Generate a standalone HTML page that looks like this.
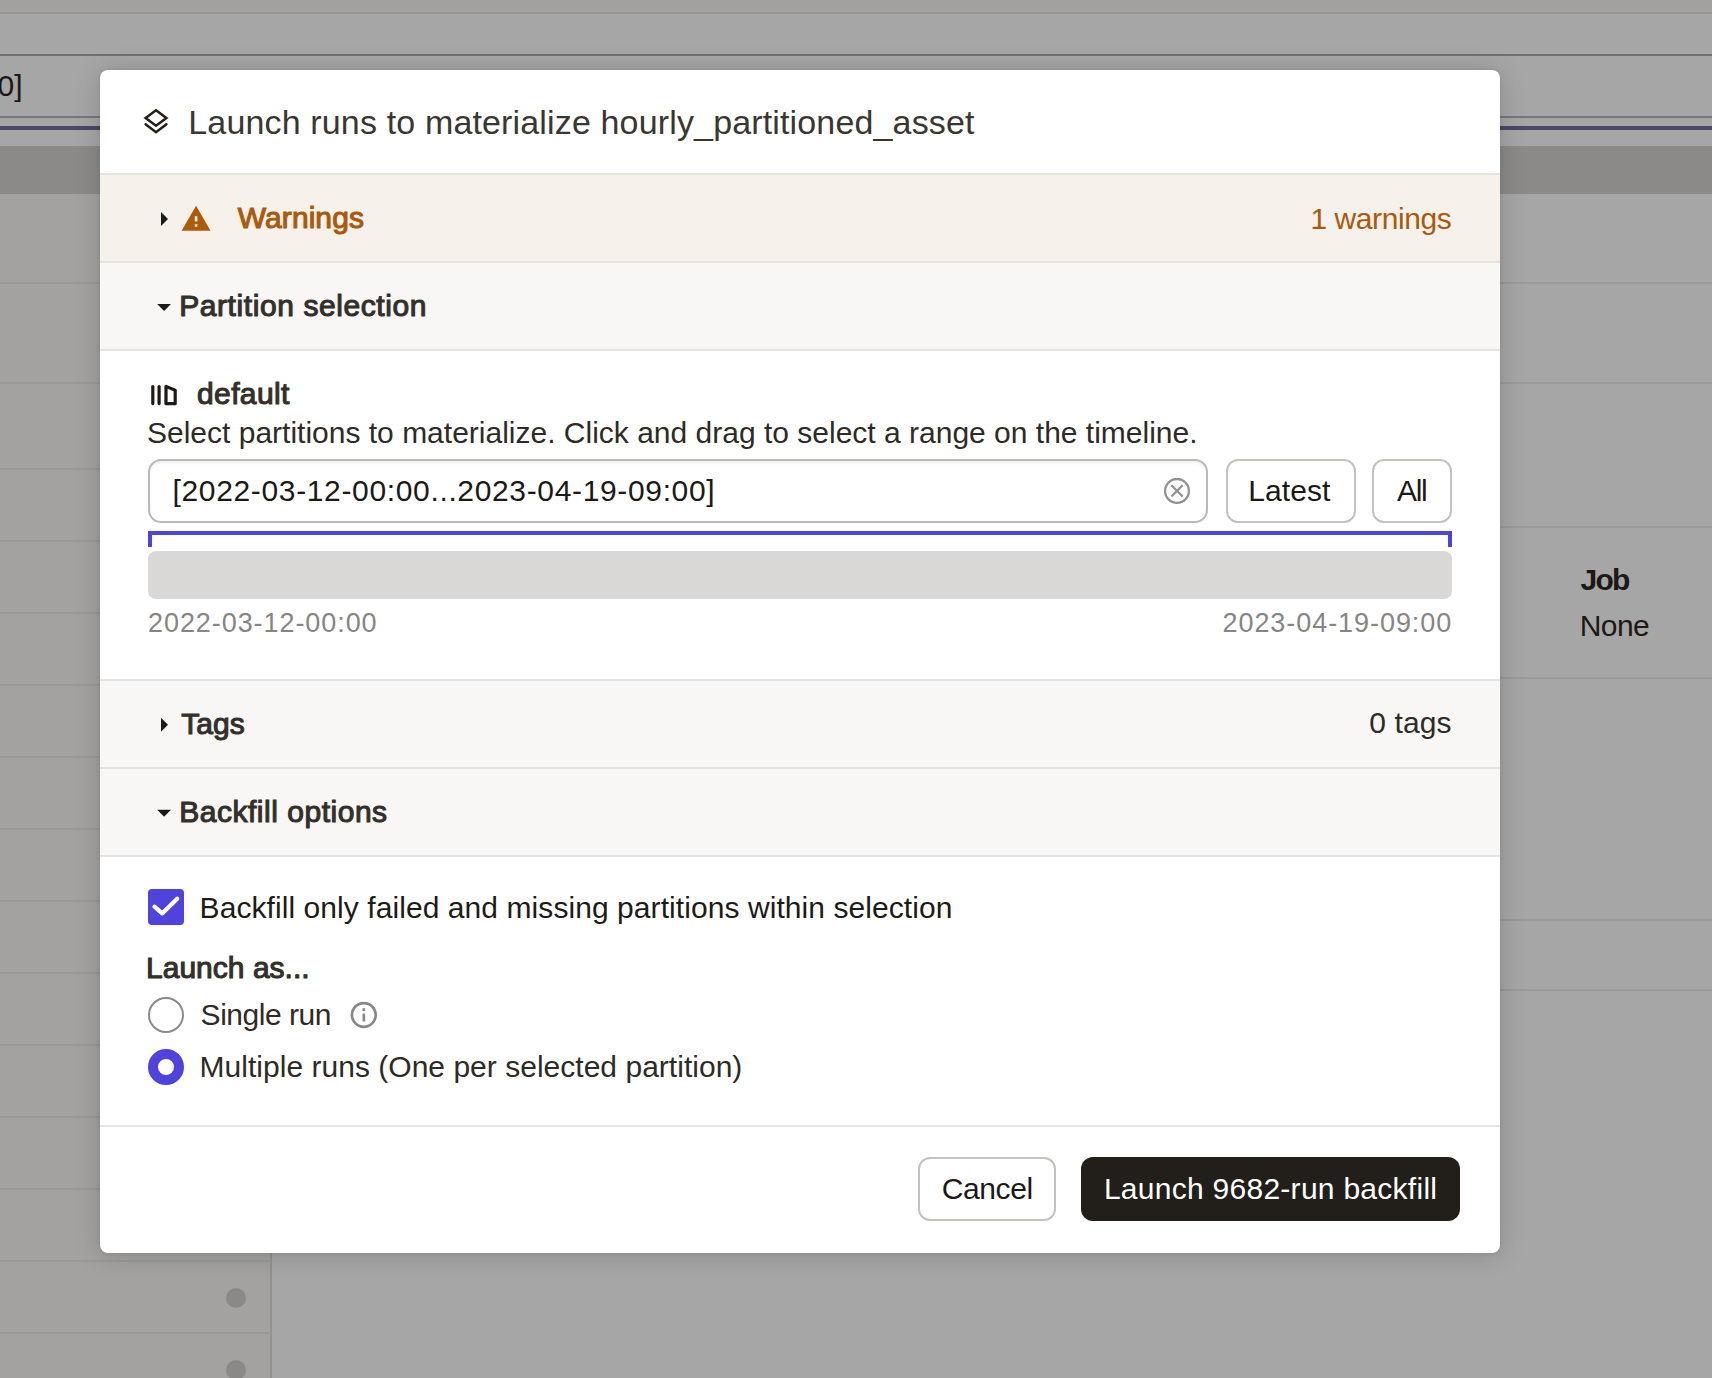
<!DOCTYPE html>
<html><head><meta charset="utf-8"><title>Launch runs</title>
<style>
html,body{margin:0;padding:0}
body{width:1712px;height:1378px;overflow:hidden;position:relative;background:#a6a6a6;font-family:"Liberation Sans",sans-serif}
.a{position:absolute}
.t{position:absolute;white-space:pre;line-height:1}
.hl{position:absolute;height:2px;background:#999999}
</style></head><body>
<!-- ===== background page (under overlay) ===== -->
<div class="a" style="left:0;top:0;width:1712px;height:12px;background:#a2a1a0"></div>
<div class="a" style="left:0;top:12px;width:1712px;height:2px;background:#979593"></div>
<div class="a" style="left:0;top:54px;width:1712px;height:2px;background:#72706e"></div>
<div class="a" style="left:0;top:116px;width:1712px;height:2px;background:#7a7876"></div>
<div class="a" style="left:0;top:126px;width:1712px;height:4px;background:#4b4769"></div>
<div class="a" style="left:0;top:146px;width:1712px;height:48px;background:#8b8a88"></div>
<div class="a" style="left:0;top:194px;width:271px;height:1184px;background:#a3a2a0"></div>
<div class="a" style="left:270px;top:194px;width:2px;height:1184px;background:#939291"></div>
<div class="hl" style="left:0;top:282px;width:1712px"></div>
<div class="hl" style="left:0;top:382px;width:1712px"></div>
<div class="hl" style="left:0;top:468px;width:271px"></div>
<div class="hl" style="left:0;top:540px;width:271px"></div>
<div class="hl" style="left:0;top:612px;width:271px"></div>
<div class="hl" style="left:0;top:684px;width:271px"></div>
<div class="hl" style="left:0;top:756px;width:271px"></div>
<div class="hl" style="left:0;top:828px;width:271px"></div>
<div class="hl" style="left:0;top:900px;width:271px"></div>
<div class="hl" style="left:0;top:972px;width:271px"></div>
<div class="hl" style="left:0;top:1044px;width:271px"></div>
<div class="hl" style="left:0;top:1116px;width:271px"></div>
<div class="hl" style="left:0;top:1188px;width:271px"></div>
<div class="hl" style="left:0;top:1260px;width:271px"></div>
<div class="hl" style="left:0;top:1332px;width:271px"></div>
<div class="hl" style="left:1300px;top:526px;width:412px"></div>
<div class="hl" style="left:1300px;top:677px;width:412px"></div>
<div class="hl" style="left:1300px;top:919px;width:412px"></div>
<div class="hl" style="left:1300px;top:989px;width:412px"></div>
<div class="a" style="left:226px;top:1288px;width:20px;height:20px;border-radius:50%;background:#8a8988"></div>
<div class="a" style="left:226px;top:1360px;width:20px;height:20px;border-radius:50%;background:#8a8988"></div>

<!-- ===== dialog ===== -->
<div class="a" style="left:100px;top:70px;width:1400px;height:1183px;background:#ffffff;border-radius:8px;box-shadow:0 0 4px rgba(0,0,0,0.10),0 2px 28px rgba(0,0,0,0.16)"></div>
<!-- warnings header -->
<div class="a" style="left:100px;top:173px;width:1400px;height:2px;background:#e6e4e1"></div>
<div class="a" style="left:100px;top:175px;width:1400px;height:86px;background:#f6f1eb"></div>
<div class="a" style="left:100px;top:261px;width:1400px;height:2px;background:#e6e4e1"></div>
<!-- partition header -->
<div class="a" style="left:100px;top:263px;width:1400px;height:86px;background:#f8f7f5"></div>
<div class="a" style="left:100px;top:349px;width:1400px;height:2px;background:#e6e4e1"></div>
<!-- tags header -->
<div class="a" style="left:100px;top:679px;width:1400px;height:2px;background:#e6e4e1"></div>
<div class="a" style="left:100px;top:681px;width:1400px;height:86px;background:#f8f7f5"></div>
<div class="a" style="left:100px;top:767px;width:1400px;height:2px;background:#e6e4e1"></div>
<!-- backfill header -->
<div class="a" style="left:100px;top:769px;width:1400px;height:86px;background:#f8f7f5"></div>
<div class="a" style="left:100px;top:855px;width:1400px;height:2px;background:#e6e4e1"></div>
<!-- footer border -->
<div class="a" style="left:100px;top:1125px;width:1400px;height:2px;background:#e6e4e1"></div>

<!-- input -->
<div class="a" style="left:148px;top:459px;width:1056px;height:60px;border:2px solid #bcbab6;border-radius:13px;background:#fff;box-shadow:inset 0 2px 3px rgba(0,0,0,0.06)"></div>
<div class="a" style="left:1226px;top:459px;width:126px;height:60px;border:2px solid #c4c2be;border-radius:12px;background:#fff"></div>
<div class="a" style="left:1372px;top:459px;width:76px;height:60px;border:2px solid #c4c2be;border-radius:12px;background:#fff"></div>
<!-- timeline bracket -->
<div class="a" style="left:148px;top:531px;width:1304px;height:4px;background:#4f43dd"></div>
<div class="a" style="left:148px;top:531px;width:4px;height:16px;background:#4f43dd"></div>
<div class="a" style="left:1448px;top:531px;width:4px;height:16px;background:#4f43dd"></div>
<div class="a" style="left:148px;top:551px;width:1304px;height:48px;background:#d9d8d7;border-radius:8px"></div>

<!-- checkbox / radios -->
<div class="a" style="left:148px;top:889px;width:36px;height:36px;background:#4f43dd;border-radius:4px"></div>
<div class="a" style="left:148px;top:997px;width:32px;height:32px;border:2px solid #8b8a88;border-radius:50%;background:#fff"></div>
<div class="a" style="left:148px;top:1049px;width:16px;height:16px;border:10px solid #4f43dd;border-radius:50%;background:#fff"></div>

<!-- footer buttons -->
<div class="a" style="left:918px;top:1157px;width:134px;height:60px;border:2px solid #c4c2be;border-radius:12px;background:#fff"></div>
<div class="a" style="left:1081px;top:1157px;width:379px;height:64px;border-radius:12px;background:#221f1b"></div>

<!-- icons -->
<svg class="a" style="left:0;top:0" width="1712" height="1378" viewBox="0 0 1712 1378">
  <!-- layers icon -->
  <g fill="none" stroke="#231f1b" stroke-width="2.5" stroke-linejoin="miter" stroke-linecap="round">
    <path d="M156 110.3 L166.4 118 L156 125.7 L145.6 118 Z"/>
    <path d="M145.6 124.2 L156 132.2 L166.4 124.2"/>
  </g>
  <!-- carets -->
  <path d="M161 211.9 L168 218.9 L161 225.9 Z" fill="#1d1a17"/>
  <path d="M157.2 304 L171 304 L164.1 311 Z" fill="#1d1a17"/>
  <path d="M161 717.8 L168 724.8 L161 731.8 Z" fill="#1d1a17"/>
  <path d="M157.2 809.8 L171 809.8 L164.1 816.8 Z" fill="#1d1a17"/>
  <!-- warning -->
  <g transform="translate(180.3 203.2) scale(1.315)"><path d="M1 21h22L12 2 1 21zm12-3h-2v-2h2v2zm0-4h-2v-4h2v4z" fill="#ad5b08"/></g>
  <!-- partition icon -->
  <g fill="none" stroke="#1d1a17" stroke-width="3.2" stroke-linecap="round" stroke-linejoin="round">
    <path d="M152.8 386.6 V403.6"/>
    <path d="M159.1 386.6 V403.6"/>
    <path d="M166 386.4 L175.2 390.3 V403.7 H166 Z"/>
  </g>
  <!-- clear icon -->
  <g fill="none" stroke="#939291" stroke-width="2.3">
    <circle cx="1177" cy="490.9" r="11.9"/>
    <path d="M1171.4 485.3 L1182.6 496.5 M1182.6 485.3 L1171.4 496.5"/>
  </g>
  <!-- info icon -->
  <g transform="translate(348 999.1) scale(1.32)"><path d="M11 7h2v2h-2zm0 4h2v6h-2zm1-9C6.48 2 2 6.48 2 12s4.48 10 10 10 10-4.48 10-10S17.52 2 12 2zm0 18c-4.41 0-8-3.59-8-8s3.59-8 8-8 8 3.59 8 8-3.59 8-8 8z" fill="#888786"/></g>
  <!-- check mark -->
  <path d="M154.5 906.7 L162.2 913.4 L177.2 898.7" fill="none" stroke="#ffffff" stroke-width="4.2" stroke-linecap="round" stroke-linejoin="round"/>
</svg>

<div class="t" style="left:188.3px;top:105px;font-size:34px;color:#3a3632;letter-spacing:0.15px">Launch runs to materialize hourly_partitioned_asset</div>
<div class="t" style="left:237.8px;top:203px;font-size:30px; -webkit-text-stroke:1.1px #aa5a0b;color:#aa5a0b;letter-spacing:0.07px">Warnings</div>
<div class="t" style="left:1310.4px;top:204px;font-size:30px;color:#aa5a0b;letter-spacing:-0.41px">1 warnings</div>
<div class="t" style="left:179.2px;top:291px;font-size:30px; -webkit-text-stroke:1.1px #33302b;color:#33302b;letter-spacing:0.58px">Partition selection</div>
<div class="t" style="left:197.0px;top:379px;font-size:30px; -webkit-text-stroke:1.1px #33302b;color:#33302b;letter-spacing:0.38px">default</div>
<div class="t" style="left:147.0px;top:418px;font-size:30px;color:#2e2b27;letter-spacing:0.00px">Select partitions to materialize. Click and drag to select a range on the timeline.</div>
<div class="t" style="left:172.5px;top:476px;font-size:30px;color:#1c1917;letter-spacing:0.65px">[2022-03-12-00:00...2023-04-19-09:00]</div>
<div class="t" style="left:1248.3px;top:476px;font-size:30px;color:#1c1917;letter-spacing:0.08px">Latest</div>
<div class="t" style="left:1397.0px;top:476px;font-size:30px;color:#1c1917;letter-spacing:-1.30px">All</div>
<div class="t" style="left:148.0px;top:610px;font-size:27px;color:#878583;letter-spacing:0.93px">2022-03-12-00:00</div>
<div class="t" style="left:1222.5px;top:610px;font-size:27px;color:#878583;letter-spacing:0.94px">2023-04-19-09:00</div>
<div class="t" style="left:181.2px;top:709px;font-size:30px; -webkit-text-stroke:1.1px #33302b;color:#33302b;letter-spacing:0.03px">Tags</div>
<div class="t" style="left:1369.3px;top:708px;font-size:30px;color:#2e2b27;letter-spacing:0.12px">0 tags</div>
<div class="t" style="left:179.2px;top:797px;font-size:30px; -webkit-text-stroke:1.1px #33302b;color:#33302b;letter-spacing:0.52px">Backfill options</div>
<div class="t" style="left:199.6px;top:893px;font-size:30px;color:#1e1b17;letter-spacing:0.07px">Backfill only failed and missing partitions within selection</div>
<div class="t" style="left:146.0px;top:953px;font-size:30px; -webkit-text-stroke:1.1px #33302b;color:#33302b;letter-spacing:0.02px">Launch as...</div>
<div class="t" style="left:200.6px;top:1000px;font-size:30px;color:#2e2b27;letter-spacing:-0.47px">Single run</div>
<div class="t" style="left:199.6px;top:1052px;font-size:30px;color:#2e2b27;letter-spacing:0.02px">Multiple runs (One per selected partition)</div>
<div class="t" style="left:941.7px;top:1174px;font-size:30px;color:#1c1917;letter-spacing:-0.38px">Cancel</div>
<div class="t" style="left:1103.9px;top:1174px;font-size:30px;color:#ffffff;letter-spacing:0.27px">Launch 9682-run backfill</div>
<div class="t" style="left:1580.4px;top:565px;font-size:30px; font-weight:700;color:#1b1815;letter-spacing:-1.70px">Job</div>
<div class="t" style="left:1579.7px;top:611px;font-size:30px;color:#1b1815;letter-spacing:-0.57px">None</div>
<div class="t" style="left:-2.5px;top:71px;font-size:30px;color:#1b1815;letter-spacing:0.00px">0]</div>
</body></html>
